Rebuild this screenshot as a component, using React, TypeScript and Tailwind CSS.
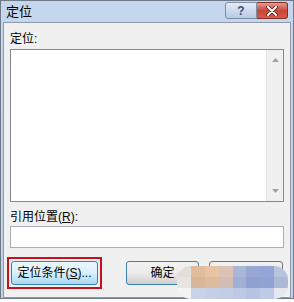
import React from "react";

const font = { fontFamily: '"Liberation Sans", "Noto Sans CJK SC", sans-serif' };

// mosaic blur blocks over the cancel button
const mosaic = [
  ["#e4ddd8", "#e2bd9c", "#e8c3a4", "#dcc2b4", "#a9b6d8", "#97a8d3", "#93a6d6", "#b8c3de"],
  ["#e8e4e2", "#d9b698", "#dfbb9e", "#d2bcb6", "#9fafd6", "#8ea1cf", "#8ea2d3", "#aeb9d8"],
  ["#f4f4f4", "#c9d2e6", "#c4cfe6", "#c3cde5", "#bcc8e4", "#b6c3e2", "#bfcae4", "#e6e8f0"],
];

export default function App() {
  return (
    <div className="w-[294px] h-[302px] bg-white" style={font}>
      <div className="h-[299px] border border-[#6f7a87] bg-gradient-to-b from-[#c5d7ee] to-[#bfd2eb] px-[2px] flex flex-col">
        {/* title bar */}
        <div className="h-[21px] flex items-start">
          <div className="pl-[3px] pt-[3px] text-[13px] leading-[15px] text-black">定位</div>
          <div className="ml-auto flex mt-[1px] mr-[3px]">
            <div className="w-[32px] h-[17px] rounded-l-[3px] border border-[#7d8ea6] bg-gradient-to-b from-[#e3ecf7] to-[#b7cae3] flex items-center justify-center text-[12px] leading-none text-[#3a4e6e] font-bold">
              ?
            </div>
            <div className="w-[31px] h-[17px] rounded-r-[3px] border border-l-0 border-[#80302a] bg-gradient-to-b from-[#e59a8e] via-[#c8463a] to-[#d65a48] flex items-center justify-center">
              <svg width="12" height="10" viewBox="0 0 12 10">
                <path d="M2 1 L10 9 M10 1 L2 9" stroke="#4a1712" strokeWidth="3.4" strokeLinecap="round" />
                <path d="M2 1 L10 9 M10 1 L2 9" stroke="#ffffff" strokeWidth="2" strokeLinecap="round" />
              </svg>
            </div>
          </div>
        </div>

        {/* client area */}
        <div className="relative flex-1 bg-[#f0f0f0] border border-[#8e9aa8] px-[6px] flex flex-col">
          <div className="mt-[9px] h-[17px] text-[12px] leading-[14px] text-black">定位:</div>

          <div className="h-[153px] border border-[#828790] bg-white flex">
            <div className="flex-1" />
            <div className="w-[17px] bg-[#f0f0f0] border-l border-[#e6e6e6] flex flex-col items-center justify-between py-[8px]">
              <svg width="7" height="4" viewBox="0 0 7 4">
                <path d="M0 4 L3.5 0 L7 4 Z" fill="#a0a0a0" />
              </svg>
              <svg width="7" height="4" viewBox="0 0 7 4">
                <path d="M0 0 L3.5 4 L7 0 Z" fill="#a0a0a0" />
              </svg>
            </div>
          </div>

          <div className="mt-[8px] h-[14px] text-[12px] leading-[14px] text-black">
            引用位置(<span className="underline">R</span>):
          </div>

          <div className="mt-[2px] h-[22px] border border-[#abadb3] bg-white" />

          <div className="mt-[9px] flex items-center">
            <div className="ml-[-3px] border-[2px] border-[#c8101c] p-[2px]">
              <div className="w-[87px] h-[24px] rounded-[3px] border border-[#3c7fb1] bg-gradient-to-b from-[#eaf6fd] via-[#d9f0fc] to-[#a7d9f5] flex items-center justify-center text-[12px] text-black">
                定位条件(<span className="underline">S</span>)...
              </div>
            </div>
            <div className="ml-[24px] w-[73px] h-[24px] rounded-[3px] border border-[#3c7fb1] bg-gradient-to-b from-[#f2f2f2] via-[#ebebeb] to-[#cfcfcf] flex items-center justify-center text-[12px] text-black">
              确定
            </div>
            <div className="ml-[10px] w-[74px] h-[24px] rounded-[3px] border border-[#707070] bg-gradient-to-b from-[#f2f2f2] to-[#dddddd]" />
          </div>

          {/* mosaic overlay */}
          <div className="absolute left-[173px] top-[243px] w-[111px] h-[33px] rounded-[14px] overflow-hidden grid grid-cols-8 grid-rows-3">
            {mosaic.flat().map((c, i) => (
              <div key={i} style={{ backgroundColor: c }} />
            ))}
          </div>
        </div>
      </div>
    </div>
  );
}
